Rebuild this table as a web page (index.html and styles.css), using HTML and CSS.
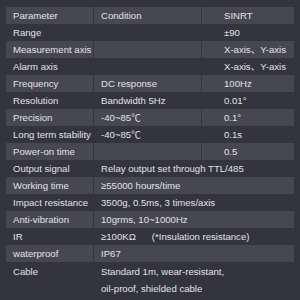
FILE: index.html
```html
<!DOCTYPE html>
<html>
<head>
<meta charset="utf-8">
<link rel="stylesheet" href="styles.css">
</head>
<body>
<table class="spec">
  <colgroup><col class="c1"><col class="c2"><col class="c3"></colgroup>
  <tr class="odd"><td>Parameter</td><td>Condition</td><td class="v">SINRT</td></tr>
  <tr><td>Range</td><td></td><td class="v">±90</td></tr>
  <tr class="odd"><td>Measurement axis</td><td></td><td class="v">X-axis、Y-axis</td></tr>
  <tr><td>Alarm axis</td><td></td><td class="v">X-axis、Y-axis</td></tr>
  <tr class="odd"><td>Frequency</td><td>DC response</td><td class="v">100Hz</td></tr>
  <tr><td>Resolution</td><td>Bandwidth 5Hz</td><td class="v">0.01°</td></tr>
  <tr class="odd"><td>Precision</td><td>-40~85℃</td><td class="v">0.1°</td></tr>
  <tr><td>Long term stability</td><td>-40~85℃</td><td class="v">0.1s</td></tr>
  <tr class="odd"><td>Power-on time</td><td></td><td class="v">0.5</td></tr>
  <tr><td>Output signal</td><td colspan="2">Relay output set through TTL/485</td></tr>
  <tr class="odd"><td>Working time</td><td colspan="2">≥55000 hours/time</td></tr>
  <tr><td>Impact resistance</td><td colspan="2">3500g, 0.5ms, 3 times/axis</td></tr>
  <tr class="odd"><td>Anti-vibration</td><td colspan="2">10grms, 10~1000Hz</td></tr>
  <tr><td>IR</td><td colspan="2">≥100KΩ<span class="note">(*Insulation resistance)</span></td></tr>
  <tr class="odd"><td>waterproof</td><td colspan="2">IP67</td></tr>
  <tr class="tall"><td class="top">Cable</td><td colspan="2">Standard 1m, wear-resistant,<br>oil-proof, shielded cable</td></tr>
</table>
</body>
</html>
```
FILE: styles.css
```css
html, body {
  margin: 0;
  padding: 0;
  background: #33343c;
  width: 300px;
  height: 300px;
  overflow: hidden;
}
body {
  padding: 7px 6px 0 6px;
  box-sizing: border-box;
  font-family: "Liberation Sans", Arial, "Noto Sans CJK SC", sans-serif;
  font-size: 9.6px;
  color: #e2e2e4;
}
.spec {
  border-collapse: separate;
  border-spacing: 0;
  width: 288px;
  table-layout: fixed;
}
.c1 { width: 87px; }
.c2 { width: 108px; }
.c3 { width: 93px; }
.spec td {
  height: 17px;
  padding: 0 0 0 7px;
  line-height: 17px;
  white-space: nowrap;
  box-sizing: border-box;
  vertical-align: middle;
}
.spec td + td {
  border-left: 1px solid #33343c;
}
.spec tr.odd td {
  background: #46474f;
}
.spec td.v {
  padding-left: 22px;
}
.note {
  margin-left: 16px;
}
.spec tr.tall td {
  line-height: 17px;
  padding-top: 1px;
}
.spec td.top {
  vertical-align: top;
}
```
